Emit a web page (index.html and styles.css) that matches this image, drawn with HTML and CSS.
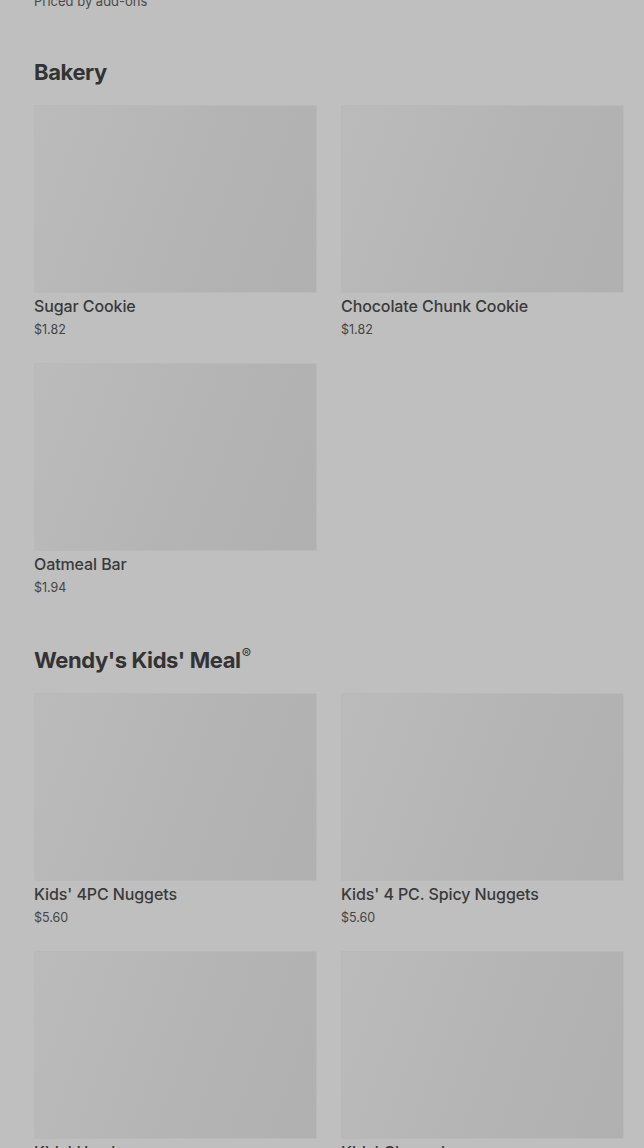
FILE: index.html
```html
<!DOCTYPE html>
<html lang="en">
<head>
<meta charset="utf-8">
<title>Menu</title>
<link rel="stylesheet" href="styles.css">
</head>
<body>
<main class="menu">
  <p class="note">Priced by add-ons</p>

  <section class="section">
    <h2 class="section-title">Bakery</h2>
    <div class="grid">
      <article class="card"><div class="thumb"></div><h3 class="name">Sugar Cookie</h3><p class="price">$1.82</p></article>
      <article class="card"><div class="thumb"></div><h3 class="name">Chocolate Chunk Cookie</h3><p class="price">$1.82</p></article>
      <article class="card"><div class="thumb"></div><h3 class="name">Oatmeal Bar</h3><p class="price">$1.94</p></article>
    </div>
  </section>

  <section class="section">
    <h2 class="section-title">Wendy's Kids' Meal<span class="reg">®</span></h2>
    <div class="grid">
      <article class="card"><div class="thumb"></div><h3 class="name">Kids' 4PC Nuggets</h3><p class="price">$5.60</p></article>
      <article class="card"><div class="thumb"></div><h3 class="name">Kids' 4 PC. Spicy Nuggets</h3><p class="price">$5.60</p></article>
      <article class="card"><div class="thumb"></div><h3 class="name">Kids' Hamburger</h3><p class="price">$5.60</p></article>
      <article class="card"><div class="thumb"></div><h3 class="name">Kids' Cheeseburger</h3><p class="price">$5.60</p></article>
    </div>
  </section>
</main>
</body>
</html>
```

FILE: styles.css
```css
html, body {
  margin: 0;
  padding: 0;
  background: #bfbfbf;
  overflow: hidden;
}
body {
  font-family: Inter, "Noto Sans", "Liberation Sans", sans-serif;
  color: #3a3a3a;
}
.menu {
  padding: 0 20px 0 34px;
  margin-top: -8px;
}
.note {
  margin: 0;
  font-size: 13px;
  line-height: 18px;
  color: #4a4a4a;
}
.section {
  margin-top: 48px;
}
.section + .section {
  margin-top: 49px;
}
.section-title {
  margin: 0 0 19px;
  height: 28px;
  font-size: 22px;
  line-height: 28px;
  font-weight: 700;
  letter-spacing: -0.4px;
  color: #333333;
}
.reg {
  display: inline-block;
  font-size: 14px;
  font-weight: 400;
  line-height: 14px;
  vertical-align: top;
  margin-top: 1px;
  margin-left: 1px;
  letter-spacing: 0;
}
.grid {
  display: grid;
  grid-template-columns: 283px 283px;
  column-gap: 24px;
  row-gap: 24px;
}
.card {
  display: flex;
  flex-direction: column;
}
.thumb {
  height: 188px;
  box-sizing: border-box;
  border: 1px solid #b9b9b9;
  border-radius: 2px;
  background: linear-gradient(110deg, #bbbbbb 0%, #b8b8b8 25%, #b4b4b4 55%, #b0b0b0 100%);
}
.name {
  margin: 3px 0 0;
  font-size: 16px;
  line-height: 20px;
  font-weight: 500;
  letter-spacing: -0.1px;
  color: #3a3a3a;
}
.price {
  margin: 5px 0 0;
  font-size: 12.5px;
  line-height: 18px;
  color: #444444;
}
```
